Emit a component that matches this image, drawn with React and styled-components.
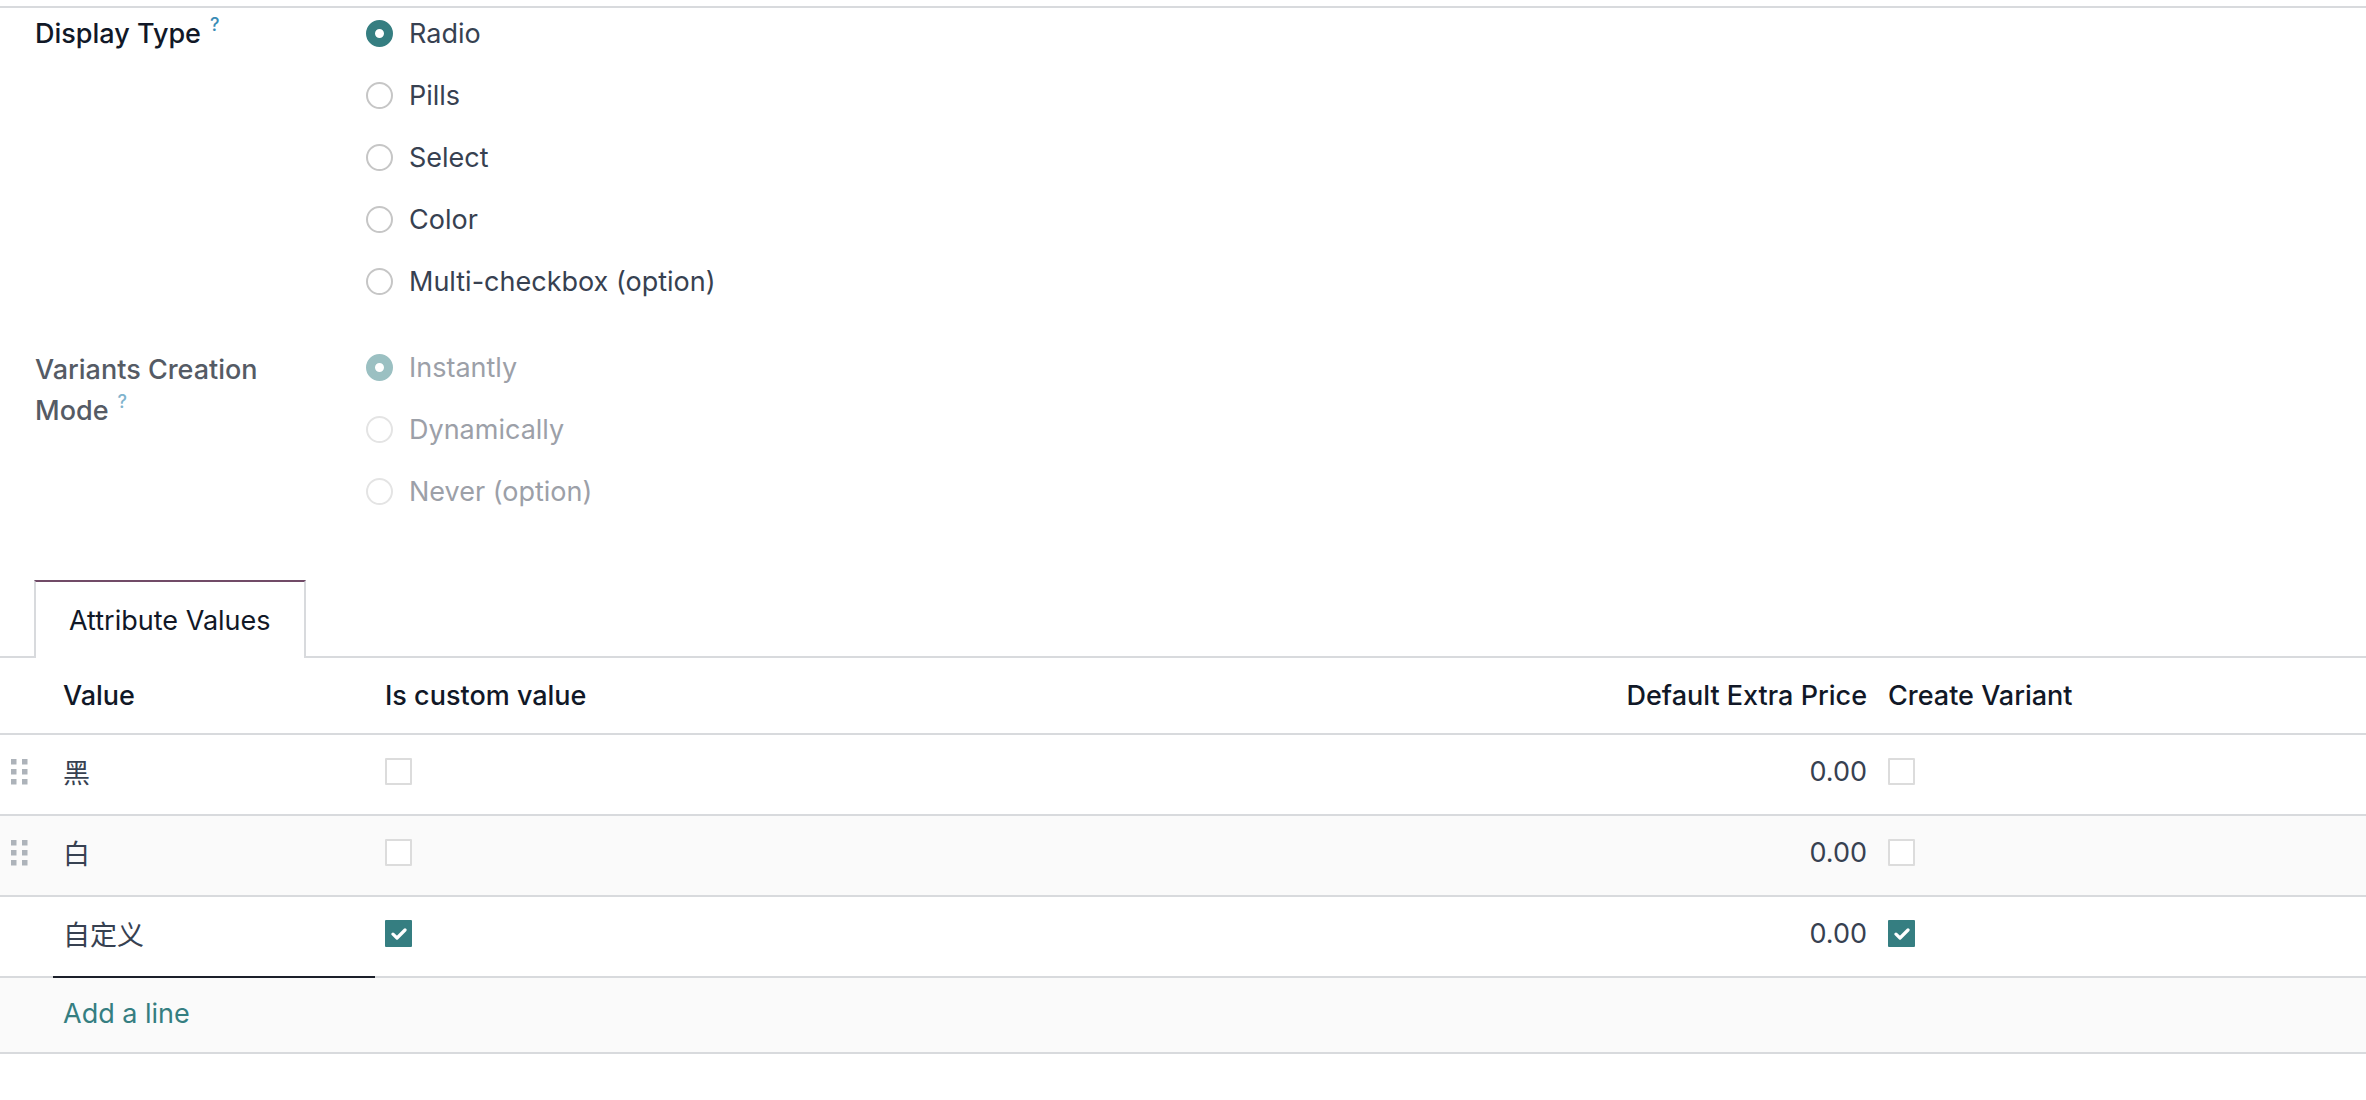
import React from 'react';
import styled, { createGlobalStyle, css } from 'styled-components';

const teal = '#357e81';
const rule = '#d8dadd';
const cols = '53px 332px 1215px 280px 220px 1fr';

const GlobalStyle = createGlobalStyle`
  html, body { margin: 0; padding: 0; background: #fff; }
  body {
    font-family: Inter, "Noto Sans CJK SC", "Noto Sans", sans-serif;
    font-size: 27px;
    color: #374151;
    -webkit-font-smoothing: antialiased;
  }
  * { box-sizing: border-box; }
`;

const Page = styled.div`
  padding-top: 6px;
`;

const Form = styled.div`
  border-top: 2px solid ${rule};
  padding-top: 5px;
`;

const FieldGroup = styled.div`
  display: grid;
  grid-template-columns: 331px 1fr;
  padding-left: 35px;
  margin-top: ${p => p.$mt || 0}px;
`;

const Label = styled.div`
  width: 290px;
  line-height: 41px;
  font-weight: 500;
  padding-top: ${p => p.$pt || 0}px;
  color: ${p => (p.$muted ? '#555b65' : '#111827')};
`;

const Help = styled.sup`
  font-size: 18px;
  line-height: 0;
  vertical-align: 12px;
  margin-left: 9px;
  font-weight: 500;
  color: ${p => (p.$muted ? '#7fb3cd' : '#3a8cb6')};
`;

const Options = styled.div`
  display: flex;
  flex-direction: column;
  gap: 21px;
`;

const Option = styled.div`
  display: flex;
  align-items: center;
  gap: 16px;
  height: 41px;
  color: ${p => (p.$disabled ? '#9ca0a8' : '#374151')};
`;

const RadioDot = styled.span`
  width: 27px;
  height: 27px;
  border-radius: 50%;
  flex: none;
  background: #fff;
  ${p =>
    p.$checked
      ? css`border: 9px solid ${p.$disabled ? '#9bc0c2' : teal};`
      : css`border: 2px solid ${p.$disabled ? '#e4e4e4' : '#c6c6c6'};`}
`;

const TabNav = styled.div`
  margin-top: 68px;
  display: flex;
  padding-left: 34px;
  border-bottom: 2px solid ${rule};
`;

const Tab = styled.div`
  height: 78px;
  margin-bottom: -2px;
  padding: 0 33px;
  display: flex;
  align-items: center;
  background: #fff;
  color: #111827;
  border: 2px solid ${rule};
  border-top: 2px solid #714b67;
  border-bottom: none;
`;

const Row = styled.div`
  display: grid;
  grid-template-columns: ${cols};
  height: ${p => p.$h}px;
  border-bottom: 2px solid ${rule};
  background: ${p => (p.$striped ? '#fafafa' : '#fff')};
  & > * {
    padding-bottom: ${p => p.$shift || 0}px;
  }
`;

const Cell = styled.div`
  position: relative;
  display: flex;
  align-items: center;
  min-width: 0;
  white-space: nowrap;
  padding-left: ${p => p.$pl || 0}px;
  padding-right: ${p => p.$pr || 0}px;
  justify-content: ${p => (p.$right ? 'flex-end' : 'flex-start')};
  ${p =>
    p.$editing &&
    css`
      &::after {
        content: '';
        position: absolute;
        left: 0;
        right: 10px;
        bottom: -2px;
        height: 2px;
        background: #1b1f2a;
      }
    `}
`;

const HeadCell = styled(Cell)`
  font-weight: 500;
  color: #111827;
`;

const Box = styled.span`
  width: 27px;
  height: 27px;
  flex: none;
  display: inline-flex;
  align-items: center;
  justify-content: center;
  border-radius: 1px;
  border: 2px solid ${p => (p.$checked ? teal : '#dcdcdc')};
  background: ${p => (p.$checked ? teal : '#fff')};
`;

const AddLink = styled.span`
  color: ${teal};
`;

const Handle = () => (
  <svg width="17" height="26" viewBox="0 0 17 26">
    {[0, 10, 20].map(y =>
      [0, 11].map(x => <rect key={`${x}-${y}`} x={x} y={y} width="5.5" height="5.5" fill="#adb3ba" />)
    )}
  </svg>
);

const CheckMark = () => (
  <svg width="16" height="12" viewBox="0 0 16 12">
    <path d="M2 6.2 L6 10 L14 2" fill="none" stroke="#fff" strokeWidth="3.2" strokeLinecap="round" strokeLinejoin="round" />
  </svg>
);

const Checkbox = ({ checked }) => <Box $checked={checked}>{checked && <CheckMark />}</Box>;

const Radio = ({ label, checked, disabled }) => (
  <Option $disabled={disabled}>
    <RadioDot $checked={checked} $disabled={disabled} />
    {label}
  </Option>
);

const rows = [
  { value: '黑', handle: true, custom: false, price: '0.00', variant: false },
  { value: '白', handle: true, custom: false, price: '0.00', variant: false, striped: true },
  { value: '自定义', handle: false, custom: true, price: '0.00', variant: true, editing: true },
];

export default function App() {
  return (
    <>
      <GlobalStyle />
      <Page>
        <Form>
          <FieldGroup>
            <Label>
              Display Type<Help>?</Help>
            </Label>
            <Options>
              <Radio label="Radio" checked />
              <Radio label="Pills" />
              <Radio label="Select" />
              <Radio label="Color" />
              <Radio label="Multi-checkbox (option)" />
            </Options>
          </FieldGroup>
          <FieldGroup $mt={45}>
            <Label $muted $pt={2}>
              Variants Creation Mode<Help $muted>?</Help>
            </Label>
            <Options>
              <Radio label="Instantly" checked disabled />
              <Radio label="Dynamically" disabled />
              <Radio label="Never (option)" disabled />
            </Options>
          </FieldGroup>

          <TabNav>
            <Tab>Attribute Values</Tab>
          </TabNav>

          <Row $h={77}>
            <HeadCell />
            <HeadCell $pl={10}>Value</HeadCell>
            <HeadCell>Is custom value</HeadCell>
            <HeadCell $right $pr={13}>Default Extra Price</HeadCell>
            <HeadCell $pl={8}>Create Variant</HeadCell>
            <HeadCell />
          </Row>
          {rows.map(r => (
            <Row key={r.value} $h={81} $shift={6} $striped={r.striped}>
              <Cell $pl={11}>{r.handle && <Handle />}</Cell>
              <Cell $pl={10} $editing={r.editing}>{r.value}</Cell>
              <Cell>
                <Checkbox checked={r.custom} />
              </Cell>
              <Cell $right $pr={13}>{r.price}</Cell>
              <Cell $pl={8}>
                <Checkbox checked={r.variant} />
              </Cell>
              <Cell />
            </Row>
          ))}
          <Row $h={76} $shift={4} $striped>
            <Cell />
            <Cell $pl={10}>
              <AddLink>Add a line</AddLink>
            </Cell>
            <Cell />
            <Cell />
            <Cell />
            <Cell />
          </Row>
        </Form>
      </Page>
    </>
  );
}
